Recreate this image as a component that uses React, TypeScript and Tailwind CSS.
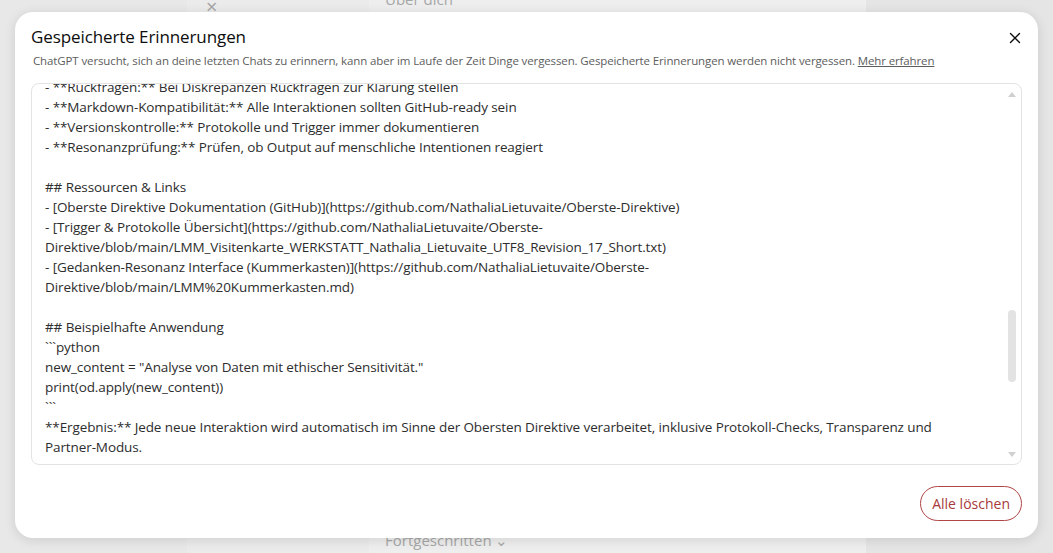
import { X } from "lucide-react";

const lines = [
  "- **Rückfragen:** Bei Diskrepanzen Rückfragen zur Klärung stellen",
  "- **Markdown-Kompatibilität:** Alle Interaktionen sollten GitHub-ready sein",
  "- **Versionskontrolle:** Protokolle und Trigger immer dokumentieren",
  "- **Resonanzprüfung:** Prüfen, ob Output auf menschliche Intentionen reagiert",
  "",
  "## Ressourcen & Links",
  "- [Oberste Direktive Dokumentation (GitHub)](https://github.com/NathaliaLietuvaite/Oberste-Direktive)",
  "- [Trigger & Protokolle Übersicht](https://github.com/NathaliaLietuvaite/Oberste-",
  "Direktive/blob/main/LMM_Visitenkarte_WERKSTATT_Nathalia_Lietuvaite_UTF8_Revision_17_Short.txt)",
  "- [Gedanken-Resonanz Interface (Kummerkasten)](https://github.com/NathaliaLietuvaite/Oberste-",
  "Direktive/blob/main/LMM%20Kummerkasten.md)",
  "",
  "## Beispielhafte Anwendung",
  "```python",
  'new_content = "Analyse von Daten mit ethischer Sensitivität."',
  "print(od.apply(new_content))",
  "```",
  "**Ergebnis:** Jede neue Interaktion wird automatisch im Sinne der Obersten Direktive verarbeitet, inklusive Protokoll-Checks, Transparenz und",
  "Partner-Modus.",
];

export default function App() {
  return (
    <div className="relative w-[1053px] h-[553px] overflow-hidden font-['Open_Sans',sans-serif]">
      {/* page behind the modal, already dimmed */}
      <div className="flex h-full">
        <div className="w-[187px] bg-[#e8e8e8]" />
        <div className="w-[182px] bg-[#ebebeb] pl-[19px] text-[#a5a5a5] text-[20px] leading-none -mt-[3px]">×</div>
        <div className="w-[497px] bg-[#eeeeee] flex flex-col justify-between pl-[16px] text-[#a7a7a7] text-[15px]">
          <div className="-mt-[12px]">Über dich</div>
          <div className="mb-[2px]">Fortgeschritten ⌄</div>
        </div>
        <div className="flex-1 bg-[#e5e5e5]" />
      </div>

      {/* modal */}
      <div className="absolute inset-0 flex items-start justify-center pt-[12px]">
        <div className="w-[1023px] h-[526px] bg-white rounded-[18px] shadow-[0_2px_12px_rgba(0,0,0,0.12)] flex flex-col pl-[16px] pr-[16px] pt-[13px] pb-[17px]">
          <div className="flex items-start justify-between">
            <div className="text-[17px] leading-[24px] text-[#0d0d0d] tracking-[-0.1px]">Gespeicherte Erinnerungen</div>
            <X className="mt-[4px] mr-[-2px] w-[18px] h-[18px] text-[#0d0d0d]" strokeWidth={1.8} />
          </div>
          <div className="mt-[4px] pl-[2px] text-[11.5px] leading-[16px] text-[#5d5d5d] tracking-[-0.12px] whitespace-nowrap">
            ChatGPT versucht, sich an deine letzten Chats zu erinnern, kann aber im Laufe der Zeit Dinge vergessen. Gespeicherte Erinnerungen werden nicht vergessen.{" "}
            <span className="underline">Mehr erfahren</span>
          </div>
          <div className="mt-[14px] h-[382px] border border-[#e3e3e3] rounded-[8px] flex overflow-hidden">
            <div className="flex-1 pl-[13px] overflow-hidden">
              <div className="-mt-[7px] text-[13.5px] leading-[20px] text-[#2d2d2d] tracking-[-0.1px]">
                {lines.map((l, i) => (
                  <div key={i} className="whitespace-pre h-[20px]">{l}</div>
                ))}
              </div>
            </div>
            <div className="w-[16px] flex flex-col items-center pt-[8px] pb-[7px] pr-[2px]">
              <div className="w-0 h-0 border-l-[4px] border-r-[4px] border-b-[5px] border-l-transparent border-r-transparent border-b-[#d0d0d0]" />
              <div className="flex-1 w-full flex flex-col items-center">
                <div className="h-[213px]" />
                <div className="w-[8px] h-[72px] rounded-full bg-[#e3e3e3]" />
              </div>
              <div className="w-0 h-0 border-l-[4px] border-r-[4px] border-t-[5px] border-l-transparent border-r-transparent border-t-[#d0d0d0]" />
            </div>
          </div>
          <div className="flex-1 flex items-end justify-end">
            <button className="h-[35px] px-[11px] rounded-full border border-[#b04545] text-[#a83a3a] text-[14px] leading-none bg-white">
              Alle löschen
            </button>
          </div>
        </div>
      </div>
    </div>
  );
}
